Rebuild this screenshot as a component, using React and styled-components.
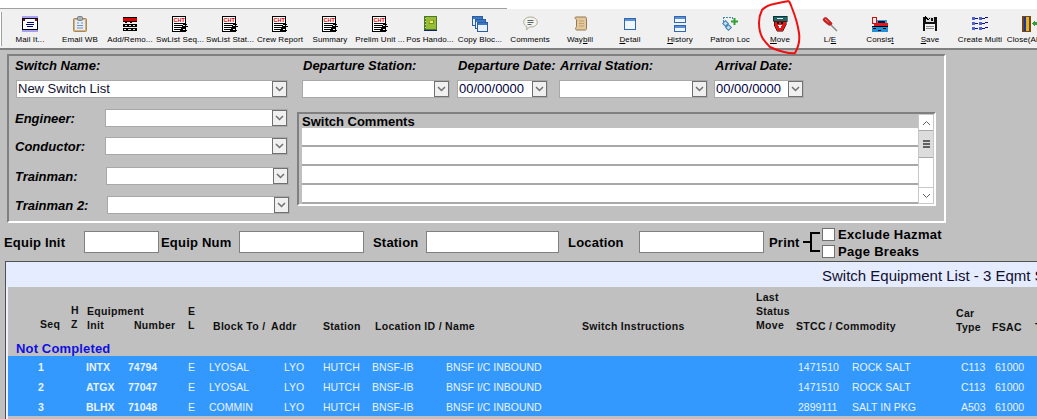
import React from "react";
import styled, { createGlobalStyle } from "styled-components";

const GlobalStyle = createGlobalStyle`
  html, body {
    margin: 0;
    padding: 0;
    background: #c0c0c0;
  }
  body {
    font-family: "Liberation Sans", Arial, sans-serif;
    color: #000;
  }
`;

function ReportIcon() {
  return (
    <svg width="16" height="16" viewBox="0 0 16 16" shapeRendering="crispEdges">
      <rect x="0.5" y="0.5" width="13" height="15" fill="#fff" stroke="#000" />
      <text x="1.5" y="5.5" fontSize="5.5" fontWeight="700" fill="#e00000" fontFamily="Liberation Sans">CHT</text>
      <path d="M2 7h11M2 9h9M2 11h11M2 13h9" stroke="#000" />
      <path d="M11 8l4 0M10 10l6 0M9 12l5 0M8 14l7 0" stroke="#000" />
    </svg>
  );
}

function MailIcon() {
  return (
    <svg width="16" height="16" viewBox="0 0 16 16" shapeRendering="crispEdges">
      <rect x="0" y="0" width="16" height="16" fill="#a8a0f0" />
      <rect x="0" y="2" width="16" height="12" fill="#000" />
      <rect x="1" y="3" width="14" height="10" fill="#fff" />
      <rect x="1" y="3" width="2" height="2" fill="#800040" />
      <rect x="13" y="3" width="2" height="2" fill="#a00030" />
      <path d="M5 6h7M4 8h8M5 10h6" stroke="#000080" />
    </svg>
  );
}

function ClipboardIcon() {
  return (
    <svg width="14" height="16" viewBox="0 0 14 16">
      <rect x="0.5" y="2.5" width="13" height="13" rx="1" fill="#d8b078" stroke="#a88858" />
      <rect x="2" y="4" width="10" height="10" fill="#e4ecf8" />
      <rect x="4.5" y="0.5" width="5" height="4" rx="1" fill="#a8b0b8" stroke="#788088" />
      <path d="M4 7h2M8 7h2M4 9.5h6M4 12h6" stroke="#7890b8" />
    </svg>
  );
}

function BricksIcon() {
  return (
    <svg width="14" height="14" viewBox="0 0 14 14" shapeRendering="crispEdges">
      <rect x="0" y="1" width="14" height="3" fill="#e00000" />
      <rect x="0" y="0" width="14" height="1" fill="#000" />
      <rect x="0" y="4" width="14" height="1" fill="#000" />
      <rect x="0" y="7" width="14" height="3" fill="#000" />
      <rect x="0" y="11" width="14" height="3" fill="#000" />
      <path d="M2 8h2M6 8h2M10 8h2M1 12h2M5 12h3M10 12h2" stroke="#e8e8e8" />
      <rect x="2" y="5" width="2" height="1" fill="#000" />
      <rect x="7" y="5" width="2" height="1" fill="#000" />
    </svg>
  );
}

function BookIcon() {
  return (
    <svg width="13" height="15" viewBox="0 0 13 15" shapeRendering="crispEdges">
      <rect x="0" y="0" width="13" height="14" fill="#4c7a20" />
      <rect x="2" y="1" width="10" height="12" fill="#98bc38" />
      <rect x="5" y="4" width="4" height="3" fill="#f0e860" stroke="#4c6a10" strokeWidth="0.5" />
      <rect x="0" y="14" width="13" height="1" fill="#102080" />
      <path d="M1 2v1M1 5v1M1 8v1M1 11v1" stroke="#d0e0a0" />
    </svg>
  );
}

function CopyIcon() {
  return (
    <svg width="16" height="16" viewBox="0 0 16 16" shapeRendering="crispEdges">
      {[0, 2, 4].map((n) => (
        <g key={n} transform={`translate(${n * 1.25},${n * 1.5})`}>
          <rect x="0.5" y="0.5" width="10" height="9" fill="#e8f0fa" stroke="#2c5c9c" />
          <rect x="1" y="1" width="9" height="2" fill="#3c78c8" />
        </g>
      ))}
    </svg>
  );
}

function CommentIcon() {
  return (
    <svg width="15" height="15" viewBox="0 0 15 15">
      <path d="M7.5 1C3.5 1 .7 3.2.7 6.2c0 2 1.3 3.6 3.3 4.4l-.5 3.2 3-2.8h1c4 0 6.8-2 6.8-4.8S11.500 1 7.500 1z" fill="#f4f4ec" stroke="#a8a898" />
      <path d="M4.500 4.500h6M4.500 6.500h6M4.500 8.500h4" stroke="#586878" />
    </svg>
  );
}

function ScrollIcon() {
  return (
    <svg width="13" height="15" viewBox="0 0 13 15">
      <path d="M2 1h9c1 0 1.500.6 1.500 1.500v10c0 1-.6 1.500-1.500 1.500H3c-1 0-1.500-.6-1.500-1.500 0-1 1-1 1-2V4C2.500 3 .5 2.500 1 1.500 1.200 1.200 1.500 1 2 1z" fill="#e2c89c" stroke="#96784c" />
      <path d="M5 5h5M5 7.500h5M5 10h5" stroke="#c0a070" />
    </svg>
  );
}

function WindowIcon() {
  return (
    <svg width="12" height="12" viewBox="0 0 12 12" shapeRendering="crispEdges">
      <rect x="0.500" y="0.500" width="11" height="11" fill="#f0f6fe" stroke="#3068b0" />
      <rect x="1" y="1" width="10" height="2" fill="#5890d8" />
    </svg>
  );
}

function HistoryIcon() {
  return (
    <svg width="12" height="16" viewBox="0 0 12 16" shapeRendering="crispEdges">
      <rect x="0.500" y="0.500" width="11" height="6" fill="#f0f6fe" stroke="#3068b0" />
      <rect x="1" y="1" width="10" height="2" fill="#5890d8" />
      <rect x="0.500" y="9.500" width="11" height="6" fill="#f0f6fe" stroke="#3068b0" />
      <rect x="1" y="10" width="10" height="2" fill="#5890d8" />
    </svg>
  );
}

function PatronIcon() {
  return (
    <svg width="16" height="16" viewBox="0 0 16 16">
      <path d="M1 1.500h10" stroke="#4088b8" strokeDasharray="2 1" />
      <path d="M1.500 1v5M10.500 1v3" stroke="#4088b8" strokeDasharray="2 1" />
      <rect x="1.500" y="5.500" width="4" height="4" fill="#c8e0f0" stroke="#3880b0" transform="rotate(45 3.500 7.500)" />
      <rect x="4.500" y="9.500" width="4" height="4" fill="#c8e0f0" stroke="#3880b0" transform="rotate(45 6.500 11.500)" />
      <rect x="11.500" y="2" width="2" height="7" fill="#30a030" />
      <rect x="9" y="4.500" width="7" height="2" fill="#30a030" />
    </svg>
  );
}

function MoveIcon() {
  return (
    <svg width="16" height="16" viewBox="0 0 16 16" shapeRendering="crispEdges">
      <rect x="1" y="0" width="14" height="5" fill="#186868" stroke="#000" strokeWidth="0.500" />
      <rect x="5" y="2" width="6" height="1" fill="#e8e8e8" />
      <path d="M2 5h12v4l-3 6H5L2 9z" fill="#e01818" stroke="#000" strokeWidth="0.500" />
      <rect x="5" y="6" width="2" height="2" fill="#000" />
      <rect x="9" y="6" width="2" height="2" fill="#000" />
      <path d="M6 9l2 4 2-4z" fill="#f8f8f8" />
    </svg>
  );
}

function DriverIcon() {
  return (
    <svg width="16" height="16" viewBox="0 0 16 16">
      <path d="M9 9l6 6" stroke="#888" strokeWidth="1.500" />
      <path d="M1.500 2.500c1-1.500 3-1.500 4 0l4 4c1 1 .5 2-.5 2.500s-1.700.7-2.500 0l-4.500-3.500C1 4.500.8 3.500 1.500 2.500z" fill="#d02020" stroke="#901010" strokeWidth="0.500" />
      <path d="M3 3l3.500 3" stroke="#f09090" />
    </svg>
  );
}

function ConsistIcon() {
  return (
    <svg width="16" height="16" viewBox="0 0 16 16" shapeRendering="crispEdges">
      <rect x="0" y="11" width="16" height="5" fill="#2090d8" />
      <path d="M1 12h3M6 14h3M11 12h3" stroke="#000" />
      <rect x="4" y="4" width="11" height="5" fill="#30a0d0" />
      <rect x="2" y="7" width="14" height="3" fill="#e01818" />
      <rect x="0" y="1" width="4" height="6" fill="#e8e8e8" stroke="#d01010" />
      <rect x="6" y="5" width="7" height="2" fill="#101040" />
      <rect x="0" y="10" width="16" height="1" fill="#000" />
    </svg>
  );
}

function FloppyIcon() {
  return (
    <svg width="14" height="15" viewBox="0 0 14 15" shapeRendering="crispEdges">
      <rect x="0" y="1" width="14" height="14" fill="#101010" />
      <rect x="3" y="1" width="8" height="5" fill="#d8d8d8" />
      <rect x="8" y="2" width="2" height="3" fill="#101010" />
      <rect x="2" y="8" width="10" height="7" fill="#f0f0f0" />
      <path d="M3 10h8M3 12h8" stroke="#888" />
      <path d="M2 0l3 4 2-2" stroke="#000" fill="none" />
    </svg>
  );
}

function MultiIcon() {
  return (
    <svg width="16" height="14" viewBox="0 0 16 14" shapeRendering="crispEdges">
      {[0, 5, 10].map((y) => (
        <g key={y}>
          <rect x="0" y={y} width="3" height="3" fill="#5060d0" />
          <rect x="3" y={y + 1} width="3" height="1" fill="#101080" />
          <rect x="7" y={y} width="3" height="3" fill="#5060d0" />
          <rect x="10" y={y + 1} width="3" height="1" fill="#101080" />
          <rect x="13" y={y} width="3" height="1" fill="#101080" />
        </g>
      ))}
    </svg>
  );
}

function DoorIcon() {
  return (
    <svg width="16" height="16" viewBox="0 0 16 16" shapeRendering="crispEdges">
      <rect x="0" y="0" width="9" height="16" fill="#704818" />
      <rect x="2" y="1" width="5" height="14" fill="#e8b020" />
      <rect x="2" y="1" width="2" height="14" fill="#1838a0" />
      <path d="M10 7l3-3v2h3v3h-3v2z" fill="#30a030" />
    </svg>
  );
}

const tools = [
  { label: "Mail It...", icon: <MailIcon /> },
  { label: "Email WB", icon: <ClipboardIcon /> },
  { label: "Add/Remo...", icon: <BricksIcon /> },
  { label: "SwList Seq...", icon: <ReportIcon /> },
  { label: "SwList Stat...", icon: <ReportIcon /> },
  { label: "Crew Report", icon: <ReportIcon /> },
  { label: "Summary", icon: <ReportIcon /> },
  { label: "Prelim Unit ...", icon: <ReportIcon /> },
  { label: "Pos Hando...", icon: <BookIcon /> },
  { label: "Copy Bloc...", icon: <CopyIcon /> },
  { label: "Comments", icon: <CommentIcon /> },
  { label: <>Way<u>b</u>ill</>, icon: <ScrollIcon /> },
  { label: <><u>D</u>etail</>, icon: <WindowIcon /> },
  { label: <><u>H</u>istory</>, icon: <HistoryIcon /> },
  { label: "Patron Loc", icon: <PatronIcon /> },
  { label: <><u>M</u>ove</>, icon: <MoveIcon /> },
  { label: <>L/<u>E</u></>, icon: <DriverIcon /> },
  { label: <>Consis<u>t</u></>, icon: <ConsistIcon /> },
  { label: <><u>S</u>ave</>, icon: <FloppyIcon /> },
  { label: "Create Multi", icon: <MultiIcon /> },
  { label: "Close(Alt+X)", icon: <DoorIcon /> },
];

const crew = [
  { label: "Engineer:", indent: 0, top: 11 },
  { label: "Conductor:", indent: 0, top: 10 },
  { label: "Trainman:", indent: 1, top: 12 },
  { label: "Trainman 2:", indent: 2, top: 11 },
];

const cars = [
  { seq: 1, init: "INTX", num: "74794", block: "LYOSAL", stcc: "1471510", name: "ROCK SALT", type: "C113" },
  { seq: 2, init: "ATGX", num: "77047", block: "LYOSAL", stcc: "1471510", name: "ROCK SALT", type: "C113" },
  { seq: 3, init: "BLHX", num: "71048", block: "COMMIN", stcc: "2899111", name: "SALT IN PKG", type: "A503" },
];

function Combo({ width, value, mono }) {
  return (
    <ComboBox $width={width}>
      <ComboField $mono={mono}>{value}</ComboField>
      <ComboButton>
        <svg width="9" height="6" viewBox="0 0 9 6">
          <path d="M1 1l3.500 3.500L8 1" fill="none" stroke="#707070" strokeWidth="1.500" />
        </svg>
      </ComboButton>
    </ComboBox>
  );
}

export default function App() {
  return (
    <Page>
      <GlobalStyle />
      <TopBand>
        <TopRule />
      </TopBand>
      <Toolbar>
        <Grip />
        {tools.map((tool, i) => (
          <Tool key={i}>
            <ToolIcon>{tool.icon}</ToolIcon>
            <ToolLabel>{tool.label}</ToolLabel>
          </Tool>
        ))}
      </Toolbar>
      <Scribble width="48" height="56" viewBox="0 0 48 56">
        <path
          d="M33 1C27 2 22 3 18 4C12 5 9 7 6 10C4 14 3 18 3 23C3 28 4 33 6 37C8 41 11 44 14 47C18 49 23 51 28 52C32 53 36 54 39 53C42 48 44 40 43 33C42 26 40 18 36 8C35 5 34 3 33 1"
          fill="none"
          stroke="#ee1111"
          strokeWidth="2"
        />
      </Scribble>

      <FormPanel>
        <LeftColumn>
          <FieldLabel>Switch Name:</FieldLabel>
          <Combo width={272} value="New Switch List" />
          {crew.map((c) => (
            <CrewRow key={c.label} $top={c.top}>
              <CrewLabel $indent={c.indent}>{c.label}</CrewLabel>
              <Combo width={183} />
            </CrewRow>
          ))}
        </LeftColumn>
        <RightColumn>
          <StationRow>
            <StationField $width={148} $gap={0}>
              <StationLabel>Departure Station:</StationLabel>
              <Combo width={148} />
            </StationField>
            <StationField $width={91} $gap={7}>
              <StationLabel>Departure Date:</StationLabel>
              <Combo width={91} value="00/00/0000" mono />
            </StationField>
            <StationField $width={149} $gap={11}>
              <StationLabel>Arrival Station:</StationLabel>
              <Combo width={149} />
            </StationField>
            <StationField $width={90} $gap={6}>
              <StationLabel>Arrival Date:</StationLabel>
              <Combo width={90} value="00/00/0000" mono />
            </StationField>
          </StationRow>
          <CommentsBox>
            <CommentsMain>
              <CommentsTitle>Switch Comments</CommentsTitle>
              <CommentLine />
              <CommentLine />
              <CommentLine />
              <CommentLine />
            </CommentsMain>
            <ScrollBar>
              <ScrollButton>
                <svg width="9" height="6" viewBox="0 0 9 6">
                  <path d="M1 5l3.500-3.500L8 5" fill="none" stroke="#606060" />
                </svg>
              </ScrollButton>
              <ScrollThumb>
                <GripBar />
                <GripBar />
                <GripBar />
              </ScrollThumb>
              <ScrollTrack />
              <ScrollButton>
                <svg width="9" height="6" viewBox="0 0 9 6">
                  <path d="M1 1l3.500 3.500L8 1" fill="none" stroke="#606060" />
                </svg>
              </ScrollButton>
            </ScrollBar>
          </CommentsBox>
        </RightColumn>
      </FormPanel>

      <FilterRow>
        <FilterLabel $width={80}>Equip Init</FilterLabel>
        <FilterInput $width={75} />
        <FilterLabel $width={78} $left={2}>Equip Num</FilterLabel>
        <FilterInput $width={125} />
        <FilterLabel $width={53} $left={9}>Station</FilterLabel>
        <FilterInput $width={133} />
        <FilterLabel $width={71} $left={9}>Location</FilterLabel>
        <FilterInput $width={125} />
        <FilterLabel $width={34} $left={5}>Print</FilterLabel>
        <Bracket width="19" height="22" viewBox="0 0 19 22">
          <path d="M0 11h7M17 2H8v18h9" fill="none" stroke="#000" strokeWidth="2" />
        </Bracket>
        <PrintOptions>
          <PrintOption><CheckBox />Exclude Hazmat</PrintOption>
          <PrintOption><CheckBox />Page Breaks</PrintOption>
        </PrintOptions>
      </FilterRow>

      <ListPanel>
        <ListTitle>Switch Equipment List - 3 Eqmt Selected</ListTitle>
        <ListBody>
          <ListHead>
            <HeadRow>
              <HeadCell $down={-2}>Seq</HeadCell>
              <HeadCell $down={-2}>H<br />Z</HeadCell>
              <HeadCell $down={-1}>Equipment<br />Init<NumberHead>Number</NumberHead></HeadCell>
              <HeadCell $down={-1}>E<br />L</HeadCell>
              <HeadCell>Block To /</HeadCell>
              <HeadCell>Addr</HeadCell>
              <HeadCell>Station</HeadCell>
              <HeadCell>Location ID / Name</HeadCell>
              <HeadCell>Switch Instructions</HeadCell>
              <HeadCell $down={-1}>Last<br />Status<br />Move</HeadCell>
              <HeadCell>STCC / Commodity</HeadCell>
              <HeadCell $down={1}>Car<br />Type</HeadCell>
              <HeadCell $down={1}>FSAC</HeadCell>
              <HeadCell $down={1}>T</HeadCell>
            </HeadRow>
            <GroupTitle>Not Completed</GroupTitle>
          </ListHead>
          {cars.map((car) => (
            <CarRow key={car.seq}>
              <SeqCell>{car.seq}</SeqCell>
              <BoldCell>{car.init}</BoldCell>
              <BoldCell>{car.num}</BoldCell>
              <span>E</span>
              <span>{car.block}</span>
              <span>LYO</span>
              <span>HUTCH</span>
              <span>BNSF-IB</span>
              <span>BNSF I/C INBOUND</span>
              <span>{car.stcc}</span>
              <span>{car.name}</span>
              <span>{car.type}</span>
              <span>61000</span>
            </CarRow>
          ))}
        </ListBody>
      </ListPanel>
    </Page>
  );
}

const Page = styled.div`
  position: relative;
  width: 1037px;
  height: 419px;
  overflow: hidden;
  background: #c0c0c0;
`;

const TopBand = styled.div`
  height: 9px;
  background: #fff;
  display: flex;
  align-items: flex-end;
`;

const TopRule = styled.div`
  width: 507px;
  height: 1px;
  background: #a0a0a0;
`;

const Toolbar = styled.div`
  display: flex;
  height: 39px;
  padding-left: 5px;
  background: #f0f0f0;
  border-bottom: 2px solid #808080;
  white-space: nowrap;
  position: relative;
`;

const Grip = styled.div`
  position: absolute;
  left: 0;
  top: 3px;
  width: 1px;
  height: 34px;
  background: #fff;
  border-right: 1px solid #a0a0a0;
`;

const Tool = styled.div`
  flex: 0 0 50px;
  width: 50px;
  height: 39px;
  display: flex;
  flex-direction: column;
  align-items: center;
`;

const ToolIcon = styled.div`
  height: 17px;
  margin-top: 6px;
  display: flex;
  align-items: center;
  justify-content: center;
`;

const ToolLabel = styled.div`
  margin-top: 2px;
  font-size: 8px;
  line-height: 11px;
  letter-spacing: 0.1px;
  color: #000;
`;

const Scribble = styled.svg`
  position: absolute;
  left: 756px;
  top: 0;
`;

const FormPanel = styled.div`
  box-sizing: border-box;
  display: flex;
  width: 939px;
  height: 169px;
  margin: 4px 0 0 7px;
  padding: 0 0 0 6px;
  border: 2px solid;
  border-color: #808080 #fff #fff #808080;
`;

const LeftColumn = styled.div`
  width: 286px;
  flex: none;
`;

const RightColumn = styled.div`
  flex: 1;
  min-width: 0;
`;

const FieldLabel = styled.div`
  height: 24px;
  padding-top: 2px;
  box-sizing: border-box;
  font-size: 13px;
  line-height: 16px;
  font-weight: 700;
  font-style: italic;
  white-space: nowrap;
`;

const StationLabel = styled(FieldLabel)`
  padding-left: 2px;
`;

const ComboBox = styled.div`
  display: flex;
  width: ${(p) => p.$width}px;
  height: 18px;
  box-sizing: border-box;
  background: #fff;
  border: 1px solid #a8a8a8;
  border-right-color: #b4b4b4;
  margin-left: 1px;
`;

const ComboField = styled.div`
  flex: 1;
  min-width: 0;
  font-size: 13px;
  line-height: 16px;
  padding-left: 1px;
  color: ${(p) => (p.$mono ? "#000040" : "#101030")};
  white-space: nowrap;
  overflow: hidden;
`;

const ComboButton = styled.div`
  flex: 0 0 15px;
  box-sizing: border-box;
  width: 15px;
  background: #f0f0f0;
  border: 1px solid #707070;
  display: flex;
  align-items: center;
  justify-content: center;
`;

const CrewRow = styled.div`
  display: flex;
  align-items: center;
  margin-top: ${(p) => p.$top}px;
`;

const CrewLabel = styled.div`
  width: ${(p) => 89 + p.$indent}px;
  padding-top: 2px;
  font-size: 13px;
  line-height: 16px;
  font-weight: 700;
  font-style: italic;
  white-space: nowrap;
`;

const StationRow = styled.div`
  display: flex;
`;

const StationField = styled.div`
  width: ${(p) => p.$width}px;
  margin-left: ${(p) => p.$gap}px;
`;

const CommentsBox = styled.div`
  box-sizing: border-box;
  display: flex;
  width: 639px;
  height: 94px;
  margin: 14px 0 0 -4px;
  padding: 0 0 1px 3px;
  border: 2px solid;
  border-color: #808080 #fff #fff #808080;
`;

const CommentsMain = styled.div`
  width: 616px;
`;

const CommentsTitle = styled.div`
  height: 14px;
  font-size: 13px;
  line-height: 16px;
  font-weight: 700;
  color: #000;
`;

const CommentLine = styled.div`
  height: 17px;
  background: #fff;
  border-bottom: 2px solid #a8a8a8;
  box-sizing: content-box;
`;

const ScrollBar = styled.div`
  box-sizing: border-box;
  width: 16px;
  height: 90px;
  display: flex;
  flex-direction: column;
  background: #fff;
  border: 1px solid #c8c8c8;
`;

const ScrollButton = styled.div`
  flex: 0 0 15px;
  display: flex;
  align-items: center;
  justify-content: center;
  background: #fff;
`;

const ScrollThumb = styled.div`
  flex: 0 0 28px;
  display: flex;
  flex-direction: column;
  align-items: center;
  justify-content: center;
  gap: 1px;
  box-sizing: border-box;
  background: #dcdcdc;
  border-top: 1px solid #a8a8a8;
  border-bottom: 1px solid #a8a8a8;
`;

const GripBar = styled.div`
  width: 7px;
  height: 2px;
  background: #606060;
`;

const ScrollTrack = styled.div`
  flex: 1;
  border-bottom: 1px solid #c8c8c8;
`;

const FilterRow = styled.div`
  display: flex;
  align-items: center;
  height: 38px;
  padding-left: 4px;
`;

const FilterLabel = styled.div`
  width: ${(p) => p.$width}px;
  margin-left: ${(p) => p.$left || 0}px;
  padding-top: 1px;
  font-size: 13px;
  font-weight: 700;
  letter-spacing: 0.2px;
  white-space: nowrap;
`;

const FilterInput = styled.div`
  box-sizing: border-box;
  width: ${(p) => p.$width}px;
  height: 22px;
  background: #fff;
  border: 1px solid #808080;
`;

const Bracket = styled.svg`
  flex: none;
`;

const PrintOptions = styled.div`
  display: flex;
  flex-direction: column;
  gap: 2px;
  margin-top: 2px;
`;

const PrintOption = styled.div`
  display: flex;
  align-items: center;
  gap: 3px;
  height: 15px;
  font-size: 13px;
  font-weight: 700;
  letter-spacing: 0.3px;
  white-space: nowrap;
`;

const CheckBox = styled.div`
  box-sizing: border-box;
  width: 13px;
  height: 13px;
  background: #fff;
  border: 1px solid #707070;
`;

const ListPanel = styled.div`
  box-sizing: border-box;
  width: 1100px;
  height: 200px;
  margin-left: 5px;
  background: #eef2ff;
  border: 1px solid #505050;
  padding: 0 0 0 2px;
`;

const ListTitle = styled.div`
  height: 25px;
  margin-left: -2px;
  padding-left: 816px;
  background: #e6ecff;
  font-size: 15px;
  line-height: 28px;
  color: #101030;
  white-space: nowrap;
  overflow: hidden;
`;

const ListBody = styled.div`
  background: #c0c0c0;
  height: 174px;
`;

const ListHead = styled.div`
  height: 69px;
  display: flex;
  flex-direction: column;
`;

const HeadRow = styled.div`
  display: grid;
  grid-template-columns: 31px 16px 101px 25px 58px 52px 52px 207px 174px 40px 160px 36px 43px 40px;
  align-items: end;
  height: 47px;
  padding-left: 32px;
  font-size: 10.5px;
  line-height: 14px;
  font-weight: 700;
  letter-spacing: 0.3px;
  color: #101010;
`;

const HeadCell = styled.div`
  position: relative;
  top: ${(p) => p.$down || 0}px;
  white-space: nowrap;
`;

const NumberHead = styled.span`
  margin-left: 30px;
`;

const GroupTitle = styled.div`
  margin-top: 9px;
  padding-left: 8px;
  font-size: 13px;
  line-height: 14px;
  font-weight: 700;
  letter-spacing: 0.15px;
  color: #1010e0;
`;

const CarRow = styled.div`
  display: grid;
  grid-template-columns: 78px 42px 60px 21px 75px 39px 49px 74px 352px 54px 109px 34px 60px;
  align-items: center;
  height: 20px;
  box-sizing: border-box;
  padding-top: 1px;
  background: #3399ff;
  color: #e8f2ff;
  font-size: 10.5px;
  white-space: nowrap;
`;

const SeqCell = styled.span`
  padding-left: 30px;
  font-weight: 700;
`;

const BoldCell = styled.span`
  font-weight: 700;
`;
